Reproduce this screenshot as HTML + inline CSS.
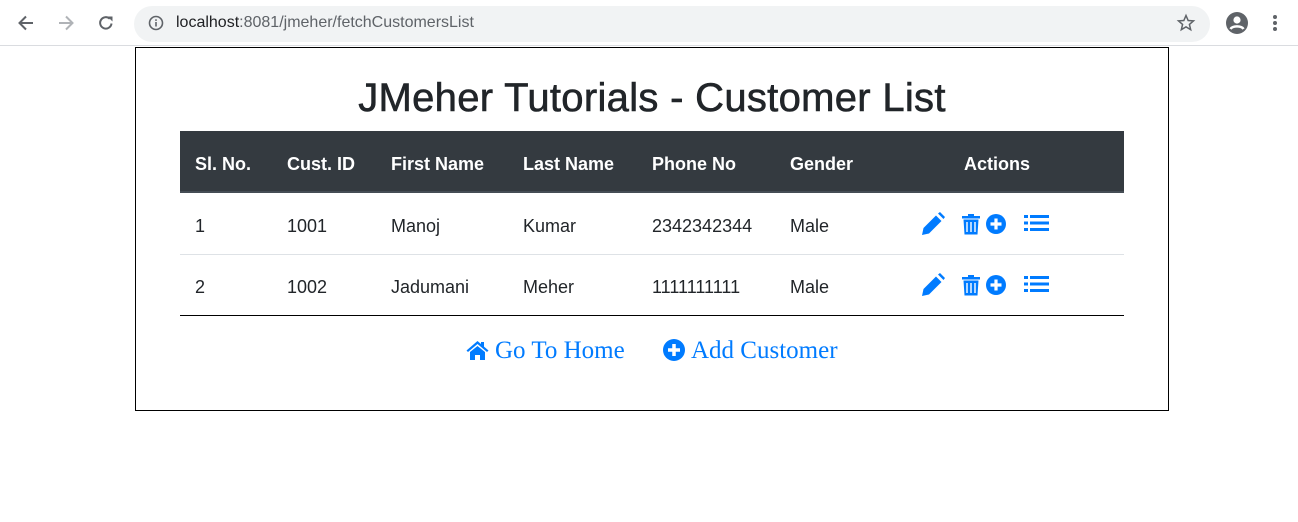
<!DOCTYPE html>
<html><head><style>
*{margin:0;padding:0;box-sizing:border-box}
body{width:1298px;height:522px;background:#fff;position:relative;overflow:hidden;font-family:"Liberation Sans",sans-serif}
.a{position:absolute;white-space:nowrap}
.bar{position:absolute;left:0;top:0;width:1298px;height:46px;background:#fff;border-bottom:1px solid #dadce0}
.url{position:absolute;left:134px;top:6px;width:1076px;height:36px;border-radius:18px;background:#f1f3f4}
.th{color:#fff;font-weight:bold;font-size:18px;top:154px}
.td{color:#212529;font-size:18px}
</style></head><body>
<div class="bar"></div>
<div class="url"></div>
<svg class="a" style="left:16px;top:13px" width="20" height="20" viewBox="0 0 20 20"><path d="M17 10H4M10 3.5L3.5 10 10 16.5" stroke="#5f6368" stroke-width="2" fill="none"/></svg>
<svg class="a" style="left:56px;top:13px" width="20" height="20" viewBox="0 0 20 20"><path d="M3 10H16M10 3.5L16.5 10 10 16.5" stroke="#b0b3b7" stroke-width="2" fill="none"/></svg>
<svg class="a" style="left:96px;top:13px" width="20" height="20" viewBox="0 0 20 20"><path d="M15.5 10.5A5.7 5.7 0 1 1 13.8 5.8" stroke="#5f6368" stroke-width="2" fill="none"/><path d="M11.5 3.5H16.5V8.5Z" fill="#5f6368"/></svg>
<svg class="a" style="left:148px;top:15px" width="16" height="16" viewBox="0 0 16 16"><circle cx="8" cy="8" r="6.5" stroke="#5f6368" stroke-width="1.6" fill="none"/><rect x="7.2" y="7" width="1.6" height="4.5" fill="#5f6368"/><rect x="7.2" y="4.3" width="1.6" height="1.6" fill="#5f6368"/></svg>
<div class="a" style="left:176px;top:14px;font-size:16px;color:#202124">localhost<span style="color:#5f6368">:8081/jmeher/fetchCustomersList</span></div>
<svg class="a" style="left:1176px;top:13px" width="20" height="20" viewBox="0 0 24 24"><path d="M12 3l2.6 6 6.4.5-4.9 4.2 1.5 6.3L12 16.6 6.4 20l1.5-6.3L3 9.5 9.4 9z" stroke="#5f6368" stroke-width="1.8" fill="none"/></svg>
<svg class="a" style="left:1225px;top:11px" width="24" height="24" viewBox="0 0 24 24"><circle cx="12" cy="12" r="11" fill="#5f6368"/><circle cx="12" cy="9" r="3.6" fill="#fff"/><path d="M5.5 18c2-3.5 11-3.5 13 0" stroke="#fff" stroke-width="2.5" fill="none"/></svg>
<svg class="a" style="left:1272px;top:14px" width="6" height="18" viewBox="0 0 6 18"><circle cx="3" cy="3" r="2" fill="#5f6368"/><circle cx="3" cy="9" r="2" fill="#5f6368"/><circle cx="3" cy="15" r="2" fill="#5f6368"/></svg>

<div class="a" style="left:135px;top:47px;width:1034px;height:364px;border:1px solid #000"></div>
<div class="a" style="left:135px;top:76px;width:1034px;text-align:center;font-size:40px;color:#212529;-webkit-text-stroke:0.6px #212529;letter-spacing:0.3px">JMeher Tutorials - Customer List</div>
<div class="a" style="left:180px;top:131px;width:944px;height:62px;background:#343a40;border-bottom:2px solid #454d55"></div>
<div class="a th" style="left:195px">Sl. No.</div>
<div class="a th" style="left:287px">Cust. ID</div>
<div class="a th" style="left:391px">First Name</div>
<div class="a th" style="left:523px">Last Name</div>
<div class="a th" style="left:652px">Phone No</div>
<div class="a th" style="left:790px">Gender</div>
<div class="a th" style="left:964px">Actions</div>
<div class="a" style="left:180px;top:254px;width:944px;height:1px;background:#dee2e6"></div>
<div class="a" style="left:180px;top:315px;width:944px;height:1px;background:#000"></div>

<div class="a td" style="left:195px;top:216px">1</div>
<div class="a td" style="left:287px;top:216px">1001</div>
<div class="a td" style="left:391px;top:216px">Manoj</div>
<div class="a td" style="left:523px;top:216px">Kumar</div>
<div class="a td" style="left:652px;top:216px">2342342344</div>
<div class="a td" style="left:790px;top:216px">Male</div>
<div class="a td" style="left:195px;top:277px">2</div>
<div class="a td" style="left:287px;top:277px">1002</div>
<div class="a td" style="left:391px;top:277px">Jadumani</div>
<div class="a td" style="left:523px;top:277px">Meher</div>
<div class="a td" style="left:652px;top:277px">1111111111</div>
<div class="a td" style="left:790px;top:277px">Male</div>

<svg width="0" height="0" style="position:absolute"><defs>
<g id="ic">
<path d="M0 22 L1.5 15 L14 2.5 L19.5 8 L7 20.5 Z M16 0.5 L18 -1 L23 4 L21.5 6 Z" fill="#007bff" transform="translate(0,1)"/>
<path d="M40 4h18v2.5H40z M46 2h6v2h-6z M41.5 7.5h15l-1 15h-13z" fill="#007bff"/>
<path d="M45 10v10M49 10v10M53 10v10" stroke="#fff" stroke-width="1.4"/>
<circle cx="74" cy="12" r="10" fill="#007bff"/><path d="M74 6.5v11M68.5 12h11" stroke="#fff" stroke-width="3.2"/>
<path d="M102 3h4v3h-4zM108 3h19v3h-19zM102 9.5h4v3h-4zM108 9.5h19v3h-19zM102 16h4v3h-4zM108 16h19v3h-19z" fill="#007bff"/>
</g></defs></svg>
<svg class="a" style="left:922px;top:212px" width="130" height="26"><use href="#ic"/></svg>
<svg class="a" style="left:922px;top:273px" width="130" height="26"><use href="#ic"/></svg>

<svg class="a" style="left:466px;top:340px" width="23" height="20" viewBox="0 0 23 20"><path d="M11.5 1L0.5 10.5 2 12 11.5 4 21 12 22.5 10.5 18 6.6V2h-3v2L11.5 1Z M4 12v8h5v-5h5v5h5v-8L11.5 6Z" fill="#007bff"/></svg>
<div class="a" style="left:495px;top:337px;font-family:'Liberation Serif',serif;font-size:25px;color:#007bff">Go To Home</div>
<svg class="a" style="left:663px;top:339px" width="22" height="22" viewBox="0 0 22 22"><circle cx="11" cy="11" r="11" fill="#007bff"/><path d="M11 5v12M5 11h12" stroke="#fff" stroke-width="3.5"/></svg>
<div class="a" style="left:691px;top:337px;font-family:'Liberation Serif',serif;font-size:25px;color:#007bff">Add Customer</div>
</body></html>
